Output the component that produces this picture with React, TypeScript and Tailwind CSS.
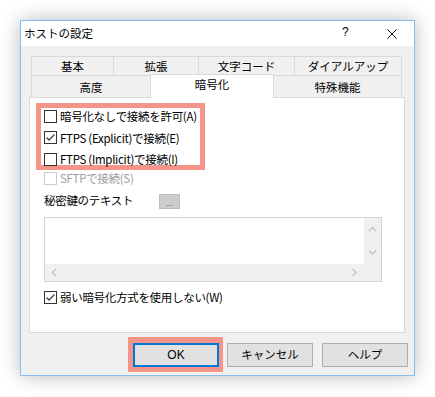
import React from "react";

const FONT = '"Noto Sans CJK JP", "Noto Sans", sans-serif';

function Check({ checked, disabled }: { checked?: boolean; disabled?: boolean }) {
  return (
    <svg width="13" height="13" viewBox="0 0 13 13" className="shrink-0">
      <rect x="0.5" y="0.5" width="12" height="12" fill="#fff" stroke={disabled ? "#cccccc" : "#333333"} />
      {checked && <path d="M2.5 6.5 L5 9 L10.5 3.5" fill="none" stroke="#444" strokeWidth="1.3" />}
    </svg>
  );
}

function Row({ label, checked, disabled }: { label: string; checked?: boolean; disabled?: boolean }) {
  return (
    <div className="flex h-[16px] items-center gap-[3px]">
      <Check checked={checked} disabled={disabled} />
      <span className={`whitespace-nowrap text-[11.5px] tracking-[-0.3px] leading-[16px] ${disabled ? "text-[#a0a0a0]" : "text-black"}`}>{label}</span>
    </div>
  );
}

function Chevron({ dir }: { dir: "up" | "down" | "left" | "right" }) {
  const d =
    dir === "up"
      ? "M1 5 L4.5 1.5 L8 5"
      : dir === "down"
      ? "M1 1.5 L4.5 5 L8 1.5"
      : dir === "left"
      ? "M5 1 L1.5 4.5 L5 8"
      : "M1.5 1 L5 4.5 L1.5 8";
  const w = dir === "up" || dir === "down" ? 9 : 7;
  const h = dir === "up" || dir === "down" ? 7 : 9;
  return (
    <svg width={w} height={h} viewBox={`0 0 ${w} ${h}`}>
      <path d={d} fill="none" stroke="#c2c2c2" strokeWidth="1.3" />
    </svg>
  );
}

export default function App() {
  return (
    <div className="w-[435px] h-[397px] bg-white pl-[20px] pt-[20px]" style={{ fontFamily: FONT }}>
      <div className="w-[395px] h-[356px] border border-[#86bff0] bg-[#f0f0f0] flex flex-col shadow-[0_0_18px_rgba(0,0,0,0.28)]">
        {/* title bar */}
        <div className="h-[25px] bg-white flex items-center relative">
          <span className="ml-[3px] text-[11.5px] text-black leading-none whitespace-nowrap">ホストの設定</span>
          <span className="absolute left-[321px] top-[5px] text-[12px] text-black leading-none" style={{ fontFamily: '"Liberation Sans", sans-serif' }}>?</span>
          <svg className="absolute left-[366px] top-[8px]" width="10" height="10" viewBox="0 0 10 10">
            <path d="M0.5 0.5 L9.5 9.5 M9.5 0.5 L0.5 9.5" stroke="#111" strokeWidth="1" />
          </svg>
        </div>
        {/* body */}
        <div className="flex-1 px-[8px] pt-[10px]">
          {/* tabs */}
          <div className="mx-[2px] flex flex-col text-[11.5px] text-black whitespace-nowrap">
            <div className="flex h-[19px]">
              <div className="w-[83px] border-l border-t border-r border-[#d9d9d9] flex items-center justify-center pt-[2px]">基本</div>
              <div className="w-[85px] border-t border-r border-[#d9d9d9] flex items-center justify-center pt-[2px]">拡張</div>
              <div className="w-[96px] border-t border-r border-[#d9d9d9] flex items-center justify-center pt-[2px]">文字コード</div>
              <div className="w-[107px] border-t border-r border-[#d9d9d9] flex items-center justify-center pt-[2px]">ダイアルアップ</div>
            </div>
            <div className="flex h-[22px] items-end">
              <div className="w-[119px] h-[22px] border-l border-t border-[#d9d9d9] flex items-center justify-center pt-[2px]">高度</div>
              <div className="w-[124px] h-[24px] -mb-[1px] relative z-10 bg-white border-l border-t border-r border-[#d9d9d9] flex items-start justify-center pt-[1px]">暗号化</div>
              <div className="w-[128px] h-[22px] border-t border-r border-[#d9d9d9] flex items-center justify-center pt-[2px]">特殊機能</div>
            </div>
          </div>
          {/* panel */}
          <div className="w-[376px] h-[236px] bg-white border border-[#d9d9d9] flex flex-col">
            <div className="ml-[6px] mt-[5px] w-[169px] h-[67px] border-[5px] border-[#f5958a] pl-[3px] pt-0 flex flex-col gap-[5.5px]">
              <Row label="暗号化なしで接続を許可(A)" />
              <Row label="FTPS (Explicit)で接続(E)" checked />
              <Row label="FTPS (Implicit)で接続(I)" />
            </div>
            <div className="ml-[14px] flex flex-col">
              <Row label="SFTPで接続(S)" disabled />
              <div className="mt-[6px] h-[17px] flex">
                <span className="w-[115px] whitespace-nowrap text-[11.5px] tracking-[-0.3px] leading-[16px] text-black">秘密鍵のテキスト</span>
                <div className="mt-[2px] w-[21px] h-[15px] bg-[#cccccc] border border-[#bdbdbd] flex items-end justify-center">
                  <span className="text-[8px] leading-[10px] text-[#707070]">...</span>
                </div>
              </div>
              <div className="mt-[8px] w-[338px] h-[65px] border border-[#d4d4d4] flex flex-col">
                <div className="flex flex-1">
                  <div className="flex-1 bg-white" />
                  <div className="w-[17px] bg-[#f0f0f0] flex flex-col items-center justify-between py-[8px]">
                    <Chevron dir="up" />
                    <Chevron dir="down" />
                  </div>
                </div>
                <div className="h-[17px] flex bg-[#f0f0f0]">
                  <div className="flex-1 flex items-center justify-between px-[6px]">
                    <Chevron dir="left" />
                    <Chevron dir="right" />
                  </div>
                  <div className="w-[17px]" />
                </div>
              </div>
              <div className="mt-[7px]">
                <Row label="弱い暗号化方式を使用しない(W)" checked />
              </div>
            </div>
          </div>
          {/* buttons */}
          <div className="mt-[10px] -mr-[2px] flex justify-end text-[11.5px] text-black whitespace-nowrap">
            <div className="-mt-[6px] border-[5px] border-t-[6px] border-r-[4px] border-[#f5958a] h-[35px]">
              <div className="w-[86px] h-[24px] bg-[#e1e1e1] border-2 border-[#0078d7] flex items-center justify-center" style={{ fontFamily: '"Liberation Sans", sans-serif', fontSize: "12px" }}>OK</div>
            </div>
            <div className="ml-[4px] w-[86px] h-[24px] bg-[#e1e1e1] border border-[#adadad] flex items-center justify-center">キャンセル</div>
            <div className="ml-[9px] w-[86px] h-[24px] bg-[#e1e1e1] border border-[#adadad] flex items-center justify-center">ヘルプ</div>
          </div>
        </div>
      </div>
    </div>
  );
}
